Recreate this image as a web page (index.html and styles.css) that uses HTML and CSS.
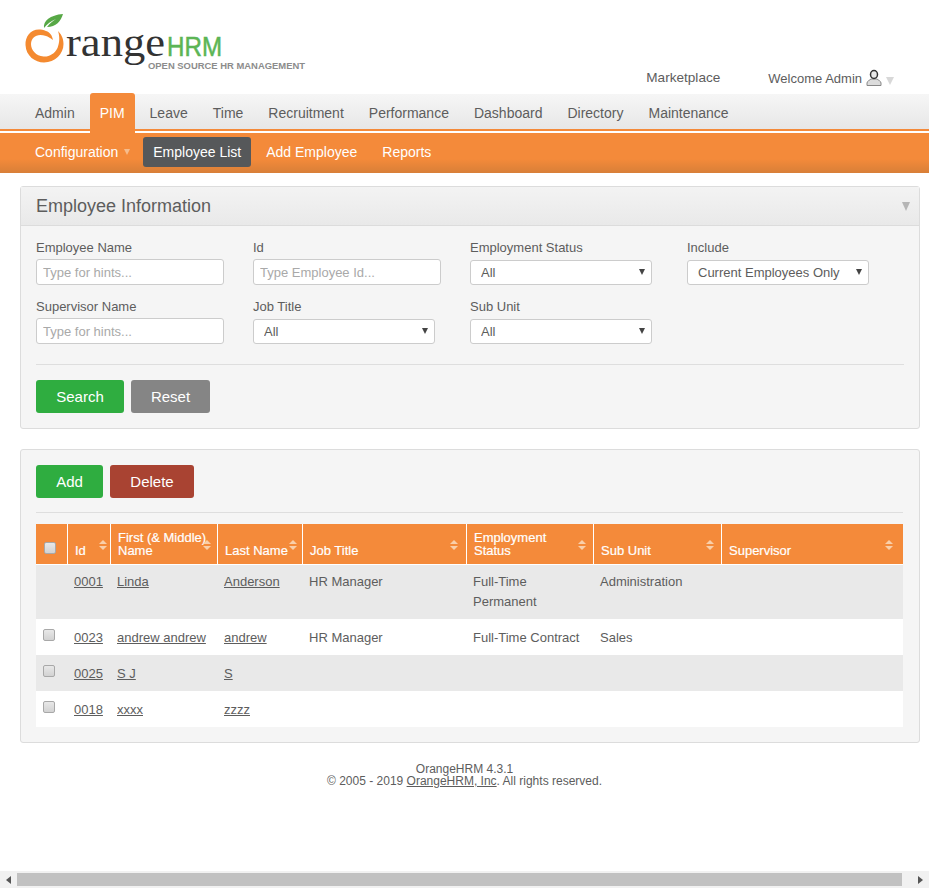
FILE: index.html
```html
<!DOCTYPE html>
<html lang="en">
<head>
<meta charset="utf-8">
<title>OrangeHRM</title>
<link rel="stylesheet" href="styles.css">
</head>
<body>
<div class="page">
  <header class="header">
    <svg class="logo" width="310" height="80" viewBox="0 0 310 80">
      <path d="M46 31 C33 26 25 35 25.5 45 C26 56 35 62.5 44 62.5 C55 62.500 63.500 54 63.500 44 C63.500 38 61 34 58 31 C60 37 59.500 43 57.500 48 C54.500 54 49 57 43.500 56.500 C36 56 31 50 31 44 C31.500 37 37 33 46 36 C50 37.500 53 40 53 40 C52 35 50 32.500 46 31 Z" fill="#f48a30"/>
      <path d="M44 28 C43 21 50 15 63 14 C61 21 56 27 47 27 C50 23 53 21 56 19 C51 21 47 24 44 28 Z" fill="#57a846"/>
      <text x="66" y="56" class="logo-range" textLength="99" lengthAdjust="spacingAndGlyphs">range</text>
      <text x="167" y="56" class="logo-hrm" textLength="55" lengthAdjust="spacingAndGlyphs">HRM</text>
      <text x="148" y="68.500" class="logo-tag" textLength="157" lengthAdjust="spacingAndGlyphs">OPEN SOURCE HR MANAGEMENT</text>
    </svg>
    <div class="header-links">
      <a class="market">Marketplace</a>
      <div class="welcome">
        <span>Welcome Admin</span>
        <svg class="user-icon" width="16" height="18" viewBox="0 0 16 18">
          <path d="M1 16.500 L1 14 C1 12 4 11 5 10 L11 10 C12 11 15 12 15 14 L15 16.500 Z" fill="#dcdcdc" stroke="#888" stroke-width="1"/>
          <ellipse cx="8" cy="5.500" rx="3.500" ry="4" fill="#e8e8e8" stroke="#333" stroke-width="1.500"/>
        </svg>
        <i class="welcome-caret"></i>
      </div>
    </div>
  </header>

  <nav class="main-nav">
    <a class="nav-item">Admin</a>
    <a class="nav-item nav-active">PIM</a>
    <a class="nav-item">Leave</a>
    <a class="nav-item">Time</a>
    <a class="nav-item">Recruitment</a>
    <a class="nav-item">Performance</a>
    <a class="nav-item">Dashboard</a>
    <a class="nav-item">Directory</a>
    <a class="nav-item">Maintenance</a>
  </nav>
  <nav class="sub-nav">
    <a class="sub-item sub-drop">Configuration</a>
    <a class="sub-item sub-active">Employee List</a>
    <a class="sub-item">Add Employee</a>
    <a class="sub-item">Reports</a>
  </nav>

  <main class="content">
    <section class="panel">
      <div class="panel-head">
        <h1>Employee Information</h1>
        <i class="panel-caret"></i>
      </div>
      <form class="panel-body">
        <div class="filters">
          <div class="field"><label>Employee Name</label><input class="text-input" placeholder="Type for hints..."></div>
          <div class="field"><label>Id</label><input class="text-input" placeholder="Type Employee Id..."></div>
          <div class="field"><label>Employment Status</label><div class="select-wrap"><select><option>All</option></select></div></div>
          <div class="field"><label>Include</label><div class="select-wrap"><select><option>Current Employees Only</option></select></div></div>
          <div class="field"><label>Supervisor Name</label><input class="text-input" placeholder="Type for hints..."></div>
          <div class="field"><label>Job Title</label><div class="select-wrap"><select><option>All</option></select></div></div>
          <div class="field"><label>Sub Unit</label><div class="select-wrap"><select><option>All</option></select></div></div>
        </div>
        <hr class="rule rule-search">
        <div class="actions">
          <button type="button" class="btn btn-green btn-search">Search</button>
          <button type="button" class="btn btn-grey btn-reset">Reset</button>
        </div>
      </form>
    </section>

    <section class="panel panel-list">
      <div class="actions">
        <button type="button" class="btn btn-green btn-add">Add</button>
        <button type="button" class="btn btn-red btn-delete">Delete</button>
      </div>
      <hr class="rule rule-list">
      <table class="grid">
        <colgroup>
          <col class="c-check"><col class="c-id"><col class="c-first"><col class="c-last"><col class="c-job"><col class="c-emp"><col class="c-sub"><col class="c-sup">
        </colgroup>
        <thead>
          <tr>
            <th class="th-check"><input type="checkbox" class="check check-head"></th>
            <th>Id<span class="sort s-id"></span></th>
            <th>First (&amp; Middle) Name<span class="sort s-first"></span></th>
            <th>Last Name<span class="sort s-last"></span></th>
            <th>Job Title<span class="sort s-job"></span></th>
            <th>Employment<br>Status<span class="sort s-emp"></span></th>
            <th>Sub Unit<span class="sort s-sub"></span></th>
            <th>Supervisor<span class="sort s-sup"></span></th>
          </tr>
        </thead>
        <tbody>
          <tr class="row-alt row-tall">
            <td></td><td><a>0001</a></td><td><a>Linda</a></td><td><a>Anderson</a></td><td>HR Manager</td><td>Full-Time Permanent</td><td>Administration</td><td></td>
          </tr>
          <tr>
            <td class="td-check"><input type="checkbox" class="check"></td><td><a>0023</a></td><td><a>andrew andrew</a></td><td><a>andrew</a></td><td>HR Manager</td><td>Full-Time Contract</td><td>Sales</td><td></td>
          </tr>
          <tr class="row-alt">
            <td class="td-check"><input type="checkbox" class="check"></td><td><a>0025</a></td><td><a>S J</a></td><td><a>S</a></td><td></td><td></td><td></td><td></td>
          </tr>
          <tr>
            <td class="td-check"><input type="checkbox" class="check"></td><td><a>0018</a></td><td><a>xxxx</a></td><td><a>zzzz</a></td><td></td><td></td><td></td><td></td>
          </tr>
        </tbody>
      </table>
    </section>
  </main>

  <footer class="footer">
    <div>OrangeHRM 4.3.1</div>
    <div>© 2005 - 2019 <a>OrangeHRM, Inc</a>. All rights reserved.</div>
  </footer>

  <div class="hscroll">
    <i class="arrow arrow-left"></i>
    <div class="thumb"></div>
    <i class="arrow arrow-right"></i>
  </div>
</div>
</body>
</html>
```
FILE: styles.css
```css
* { box-sizing: border-box; }
html, body { margin: 0; padding: 0; height: 100%; overflow: hidden; }
body {
  background: #fff;
  color: #5d5d5d;
  font-family: "Liberation Sans", Arial, sans-serif;
  font-size: 13px;
}
.page { display: flex; flex-direction: column; height: 888px; }

/* header */
.header { display: flex; justify-content: space-between; height: 94px; flex: none; }
.logo { display: block; }
.logo-range { font-family: "Liberation Serif", serif; font-size: 41px; fill: #333; }
.logo-hrm { font-family: "Liberation Sans", sans-serif; font-size: 27px; fill: #5cb555; stroke: #5cb555; stroke-width: 0.5px; }
.logo-tag { font-family: "Liberation Sans", sans-serif; font-size: 9.500px; font-weight: 700; fill: #8c8c8c; }
.header-links { display: flex; align-items: flex-start; padding: 69px 35px 0 0; gap: 48px; }
.market { font-size: 13.600px; line-height: 17px; color: #5d5d5d; }
.welcome { display: flex; align-items: flex-start; font-size: 13px; line-height: 18px; margin-top: 1px; }
.user-icon { margin-left: 4px; margin-top: -1px; }
.welcome-caret {
  margin: 7px 0 0 4px;
  border-left: 4px solid transparent;
  border-right: 4px solid transparent;
  border-top: 8px solid #d8d8d8;
}

/* nav */
.main-nav {
  display: flex; gap: 5px; flex: none;
  height: 37px; padding-left: 25px;
  background: linear-gradient(#f6f6f6, #e7e7e7);
  border-bottom: 2px solid #f48a3a;
}
.nav-item { padding: 0 10px; font-size: 14px; line-height: 39px; color: #5d5d5d; }
.nav-active {
  position: relative; z-index: 1;
  height: 40px; margin-top: -1px;
  line-height: 41px;
  background: #f48a3a; color: #fff;
  border-radius: 3px 3px 0 0;
}
.sub-nav {
  display: flex; gap: 5px; flex: none;
  height: 42px; padding: 4px 0 0 25px;
  border-top: 2px solid #fff;
  background: linear-gradient(#f48a3a 0, #f48a3a 65%, #d87f38 100%);
}
.sub-item { height: 30px; padding: 0 10px; line-height: 30px; font-size: 14px; color: #fff; border-radius: 3px; }
.sub-active { background: #56585a; }
.sub-drop { position: relative; padding-right: 20px; }
.sub-drop::after {
  content: ""; position: absolute; right: 8px; top: 12px;
  border-left: 3.500px solid transparent;
  border-right: 3.500px solid transparent;
  border-top: 6px solid #f6bc8c;
}

/* panels */
.content { padding: 13px 9px 0 20px; flex: none; }
.panel { background: #f5f5f5; border: 1px solid #dcdcdc; border-radius: 3px; }
.panel-head {
  display: flex; justify-content: space-between; align-items: center;
  height: 39px; padding: 0 9px 0 15px;
  background: linear-gradient(#f3f3f3, #e9e9e9);
  border-bottom: 1px solid #dcdcdc;
}
.panel-head h1 { margin: 0; font-size: 18px; font-weight: 400; color: #5d5d5d; }
.panel-caret {
  border-left: 4.500px solid transparent;
  border-right: 4.500px solid transparent;
  border-top: 9px solid #b5b5b5;
}
.panel-body { padding: 14px 15px 15px; }
.filters { display: grid; grid-template-columns: repeat(4, 217px); row-gap: 14px; }
.field { display: flex; flex-direction: column; align-items: flex-start; }
.field label { font-size: 13px; line-height: 15px; height: 19px; color: #5d5d5d; }
.text-input {
  width: 188px; height: 26px; padding: 0 6px;
  background: #fff; border: 1px solid #ccc; border-radius: 3px;
  font: 13px "Liberation Sans", Arial, sans-serif; color: #5d5d5d;
}
.text-input::placeholder { color: #a9a9a9; opacity: 1; }
.select-wrap { position: relative; margin-top: 1px; }
.select-wrap::after {
  content: ""; position: absolute; right: 7px; top: 9px;
  border-left: 3px solid transparent;
  border-right: 3px solid transparent;
  border-top: 6px solid #444;
  pointer-events: none;
}
.select-wrap select {
  appearance: none; display: block;
  width: 182px; height: 25px; padding: 0 0 0 10px;
  background: #fff; border: 1px solid #ccc; border-radius: 3px;
  font: 13px "Liberation Sans", Arial, sans-serif; color: #5d5d5d;
}
.rule { border: 0; border-top: 1px solid #dedede; margin: 0; }
.rule-search { margin: 20px 0 15px; }
.rule-list { margin: 14px 0 11px; }
.actions { display: flex; gap: 7px; }
.btn {
  height: 33px; padding: 0; border: 0; border-radius: 3px;
  font: 15px "Liberation Sans", Arial, sans-serif; color: #fff;
}
.btn-green { background: #2fad40; }
.btn-grey { background: #858585; }
.btn-red { background: #a94332; }
.btn-search { width: 88px; }
.btn-reset { width: 79px; }
.btn-add { width: 67px; }
.btn-delete { width: 84px; }

.panel-list { margin-top: 20px; padding: 15px 16px 15px 15px; }

/* table */
.grid { width: 867px; table-layout: fixed; border-collapse: separate; border-spacing: 0; }
.c-check { width: 32px; }
.c-id { width: 43px; }
.c-first { width: 107px; }
.c-last { width: 85px; }
.c-job { width: 164px; }
.c-emp { width: 127px; }
.c-sub { width: 128px; }
.c-sup { width: 181px; }
.grid th {
  position: relative;
  height: 41px; padding: 0 6px 7px 7px;
  background: #f48a3a; color: #fff;
  font-size: 13px; line-height: 13px; font-weight: 400;
  -webkit-text-stroke: 0.2px #fff;
  text-align: left; vertical-align: bottom;
  border-right: 1px solid #fff;
  border-bottom: 1px solid #fff;
}
.grid th:last-child { border-right: 0; }
.grid .th-check { padding: 0; }
.grid td { padding: 9px 6px 7px; line-height: 20px; font-size: 13px; vertical-align: top; color: #5d5d5d; background: #fff; }
.grid td a, .footer a { text-decoration: underline; color: #5d5d5d; }
.grid .row-alt td { background: #e9e9e9; }
.grid .row-tall td { padding: 7px 6px; }
.grid td.td-check { padding: 10px 0 0 7px; }

.check {
  appearance: none; display: block;
  width: 12px; height: 12px; margin: 0;
  background: linear-gradient(#e8e8e8, #d2d2d2);
  border: 1px solid #a8a8a8; border-radius: 2px;
}
.check-head { margin: 0 0 10px 8px; }

.sort { position: absolute; top: 16px; width: 0; height: 10px; }
.sort::before, .sort::after {
  content: ""; position: absolute; left: -4px;
  border-left: 4px solid transparent;
  border-right: 4px solid transparent;
}
.sort::before { top: 0; border-bottom: 4px solid #f9cfa9; }
.sort::after { top: 6px; border-top: 4px solid #f9cfa9; }
.s-id { right: 7px; }
.s-first { right: 10px; }
.s-last { right: 9px; }
.s-job { right: 12px; }
.s-emp { right: 11px; }
.s-sub { right: 11px; }
.s-sup { right: 14px; }

/* footer */
.footer { margin-top: 20px; text-align: center; font-size: 12px; line-height: 12px; color: #5d5d5d; flex: none; }

/* fake horizontal scrollbar */
.hscroll {
  display: flex; align-items: center;
  margin-top: auto; height: 17px; flex: none;
  background: #f1f1f1;
}
.thumb { height: 13px; flex: 1; background: #c1c1c1; margin: 0 4px 0 6px; }
.arrow { width: 0; height: 0; border-top: 4px solid transparent; border-bottom: 4px solid transparent; }
.arrow-left { margin-left: 6px; border-right: 5px solid #555; }
.arrow-right { margin-right: 6px; margin-left: 12px; border-left: 5px solid #555; }
```
